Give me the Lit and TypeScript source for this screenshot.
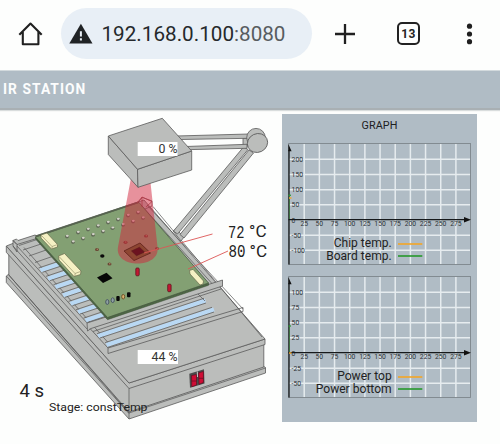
import { LitElement, html, svg, css } from "lit";
import { customElement } from "lit/decorators.js";

type Pt = [number, number];
const pts = (p: Pt[]) => p.map((q) => q.join(",")).join(" ");

@customElement("browser-bar")
class BrowserBar extends LitElement {
  static styles = css`
    :host { display: flex; align-items: center; box-sizing: border-box; height: 70px; padding: 0 17px 3px 18px; background: #fdfefd; font-family: Roboto, sans-serif; }
    svg { display: block; flex: none; }
    .pill { display: flex; align-items: center; box-sizing: border-box; width: 251px; height: 51px; margin: 0 21px 0 18px; padding-left: 8px; border-radius: 26px; background: #e8eff6; }
    .url { display: block; overflow: visible; }
    .host { font-size: 20.5px; fill: #25292c; }
    .port { fill: #575c60; }
    .tabs { display: flex; align-items: center; justify-content: center; box-sizing: border-box; width: 23px; height: 23px; margin: 0 39px 0 40px; border: 2.2px solid #222; border-radius: 5px; font-size: 12px; font-weight: 700; color: #222; letter-spacing: .3px; }
  `;
  render() {
    return html`
      <svg width="25" height="26" viewBox="18 21 25 26" fill="none" stroke="#202020" stroke-width="2.1" stroke-linejoin="round">
        <path d="M19.3 34.8 30.5 23.6 41.7 34.8M22.8 32v12.2h15.6V32"></path>
      </svg>
      <div class="pill">
        <svg width="24" height="22" viewBox="69.5 22 24 22">
          <path d="M81.4 22.8 93 42.4H69.8z" fill="#202325"></path>
          <path d="M80.4 30.2h2v5.2h-2zM80.4 37.3h2v2.2h-2z" fill="#e8eff6"></path>
        </svg>
        <svg class="url" width="190" height="26" viewBox="93 21 190 26">
          <text class="host" x="101.5" y="41" textLength="184" lengthAdjust="spacingAndGlyphs">192.168.0.100<tspan class="port">:8080</tspan></text>
        </svg>
      </div>
      <svg width="24" height="24" viewBox="0 0 24 24" stroke="#202020" stroke-width="2.3"><path d="M2 12h20M12 2v20"></path></svg>
      <div class="tabs">13</div>
      <svg width="20" height="24" viewBox="0 0 20 24" fill="#202020">
        <circle cx="10.5" cy="4.2" r="2.6"></circle><circle cx="10.5" cy="12" r="2.6"></circle><circle cx="10.5" cy="19.7" r="2.6"></circle>
      </svg>`;
  }
}

@customElement("ir-machine")
class IrMachine extends LitElement {
  static styles = css`
    :host { display: block; width: 282px; height: 334px; flex: none; }
    svg { display: block; font-family: Roboto, sans-serif; }
    .metal { fill: #bbbdbb; stroke: #5a5a5a; stroke-width: .8; stroke-linejoin: round; }
    .line { fill: none; stroke: #555; stroke-width: .7; }
    .tube { stroke: #b9d8f3; stroke-width: 4.2; }
    .cream { fill: #f5f1c4; stroke: #66694a; stroke-width: .7; }
    .box { fill: #fff; }
    .pct { font-size: 12px; fill: #333; text-anchor: end; }
    .deg { font-size: 17px; fill: #222; }
    .digits { font-family: "Liberation Mono", monospace; font-size: 18px; fill: #222; }
    .time { font-size: 18px; fill: #222; }
    .stage { font-size: 11.6px; fill: #222; }
    .pointer { stroke: #d55; stroke-width: .9; }
  `;

  base() {
    return svg`
      <polygon class="metal" points="6.3,276 9,274 129,411 263,366 265.5,367.5 265.5,373 129,419 6.3,282.5"></polygon>
      <polygon class="metal" points="8.8,252 129,386 263.8,342 263.8,367 129,412 8.8,275"></polygon>
      <path class="line" d="M8.8 275 129 413 265.5 368M129 388v31M6.3 276 129 413.6"></path>
      <polygon class="metal" points="6.3,246 129,383 265,339 265,344.5 129,388.5 6.3,252.3"></polygon>
      <polygon class="metal" points="6.3,246 14,243 144,200 265,339 129,383"></polygon>`;
  }

  rails() {
    const left = [0, 1, 2, 3, 4, 5, 6];
    return svg`
      <path class="line" d="M24 247.5l84 95M19 245.500 40 238.500M23 250l18-6M29 256l20-7M35 262.500l20-7"></path>
      ${left.map((i) => svg`
        <line class="tube" x1=${40.5 + i * 7.5} y1=${270.3 + i * 8.35} x2=${60 + i * 7.5} y2=${263.8 + i * 8.35}></line>
        <path class="line" d="M${38.5 + i * 7.5} ${268 + i * 8.35}l20-6.7M${42.5 + i * 7.5} ${272.3 + i * 8.35}l20-6.7"></path>`)}
      <line class="tube" x1="98" y1="336" x2="205.500" y2="300.500"></line>
      <line class="tube" x1="106.500" y1="345" x2="214" y2="309.500"></line>
      <path class="line" d="M93 331.500 221 289M97 333.700 204 298.300M100 338 206 303M105 342.700 212 307.300M108 347.300 214 312M196 292l9 9"></path>
      <path class="line" d="M147 205 243 309M153 206.500 262 337M141 205 216 288"></path>
      <path class="metal" d="M13 240.500 17 244.500 40 237.500 35 235 18 240.500 16.500 239zM13 240.500V246L17 252V244.500z"></path>
      <path class="line" d="M17 246 88 324M13 246 16.500 250 87 329"></path>
      <path class="metal" d="M87 323 221 280.500 222.500 280V286L91 328.500 87.500 331z"></path>
      <path class="metal" d="M90 328.500 108 348 243 307.500V311.500L108 353.500V348" fill-opacity="0"></path>
      <path class="line" d="M137 203 142.500 197.500 152 201V206L145 209"></path>`;
  }

  board() {
    const pads: Pt[] = [[67,236],[78,232],[88,229],[98,225.5],[108,222],[118,219],[128,215],[138,212],[73,241.5],[83,238],[93,234.3],[103,231],[112.5,227.7],[123,224.3],[133,221],[143,217.5]];
    const brown: Pt[] = [[97,249.5],[109.5,264],[125.5,242.3],[146,236],[157,248.5]];
    return svg`
      <polygon points="35.500,237 107.500,317 208.500,283 208.500,285.300 107.500,319.700 35.500,239" fill="#4d6744" stroke="#3c4c37" stroke-width=".5"></polygon>
      <polygon points="35.500,237 139,202.500 208.500,283 107.500,317.500" fill="#83a073" stroke="#485a41" stroke-width=".8"></polygon>
      <path d="M35.500 236.500 139 202" fill="none" stroke="#56634f" stroke-width="1.500"></path>
      ${pads.map(([x, y]) => svg`<ellipse cx=${x} cy=${y + 0.6} rx="2" ry="1.800" fill="#626a58"></ellipse><ellipse cx=${x + 0.3} cy=${y - 0.2} rx="1.500" ry="1.100" fill="#d3d3c8"></ellipse>`)}
      ${brown.map(([x, y]) => svg`<ellipse cx=${x} cy=${y} rx="2" ry="1.600" fill="#6a4634"></ellipse><circle cx=${x + 0.3} cy=${y - 0.3} r=".7" fill="#b48a68"></circle>`)}
      <ellipse cx="102.300" cy="256" rx="2.200" ry="1.700" fill="#0b0b0b"></ellipse>
      <polygon points="97,277.500 106.500,272.700 112.500,278.300 103,283" fill="#060606"></polygon>
      <polygon class="cream" points="41,235 47,233 57.500,244.500 57.500,247 51.500,249 41,238"></polygon>
      <path d="M41.500 235.500 52 246.500v2M52 246.500l5.500-2" fill="none" stroke="#98946b" stroke-width=".7"></path>
      <polygon class="cream" points="58.500,256 64.500,253.500 81,271 80.500,274.500 74,276.500 59,260"></polygon>
      <path d="M59 256.500 75 273.500v2.500M75 273.500l5.500-2" fill="none" stroke="#98946b" stroke-width=".7"></path>
      <polygon class="cream" points="189.500,270.500 193,269.300 203.500,281 203,284 200,285 190,274"></polygon>
      <g fill="#c31832" stroke="#5c1620" stroke-width=".8">
        <rect x="135.800" y="268" width="3.400" height="7.800" rx="1"></rect>
        <rect x="167.700" y="284.200" width="3.400" height="7.500" rx="1"></rect>
      </g>
      <g stroke-width=".9">
        <ellipse cx="107.300" cy="302" rx="1.600" ry="2.400" fill="#8fa1a2" stroke="#435060"></ellipse>
        <ellipse cx="112.700" cy="300.200" rx="1.600" ry="2.400" fill="#8fa1a2" stroke="#435060"></ellipse>
        <rect x="116.300" y="296" width="3.400" height="5" rx="1" fill="#080808"></rect>
        <ellipse cx="123.200" cy="296.700" rx="1.500" ry="2.300" fill="#d8b070" stroke="#6b4d22"></ellipse>
        <rect x="127" y="292.300" width="3.500" height="5" rx="1" fill="#080808"></rect>
      </g>`;
  }

  bar(p: Pt[]) {
    return svg`<polygon class="metal" points=${pts(p)}></polygon>`;
  }

  arm() {
    return svg`
      ${this.bar([[173,231],[176,229],[184,237],[181,241]])}
      ${this.bar([[243.5,147],[248,149.5],[177.5,234],[173.5,231]])}
      ${this.bar([[249,150],[253.5,153],[184,238],[180,234.5]])}
      <path class="metal" d="M243 138h6v8h-6z"></path>
      ${this.bar([[176,136],[249,134],[249,138.3],[180,139.5]])}
      ${this.bar([[186,146.5],[247,144.3],[247,148.3],[190,149.6]])}
      <ellipse class="metal" cx="256" cy="137.700" rx="9.300" ry="9.300"></ellipse>
      <ellipse class="metal" cx="257.500" cy="143" rx="10.300" ry="9.300" transform="rotate(-25 257.500 143)"></ellipse>`;
  }

  render() {
    return html`
      <svg width="282" height="334" viewBox="0 110 282 334">
        ${this.base()}${this.rails()}${this.board()}${this.arm()}
        <path d="M131 178 118 247C114 269 161 269 157.500 247L150 178z" fill="#d2233c" fill-opacity=".5"></path>
        <polygon points="124,251 140,243 150.500,253 134,260.500" fill="#8e4632" stroke="#6b2a22" stroke-width="1"></polygon>
        <polygon points="131.500,251 139.500,247.300 144.500,252 136.500,255.700" fill="#6c1220" stroke="#5a1a1c" stroke-width=".6"></polygon>
        <path d="M137 203 142 197 152 201.500 146 207M142 197v10" stroke="#b03a46" fill="none" stroke-width=".8"></path>
        <polygon class="metal" points="108.300,136 137.500,169.300 138,187.300 108.300,154.500"></polygon>
        <polygon class="metal" points="137.500,169.300 191.700,151 191.700,170 138,187.300"></polygon>
        <polygon class="metal" points="108.300,136 162.300,118.300 191.700,151 137.500,169.300"></polygon>
        <rect class="box" x="137.700" y="142" width="39.800" height="14"></rect>
        <text class="pct" x="177.500" y="153.300" textLength="19" lengthAdjust="spacingAndGlyphs">0 %</text>
        <rect class="box" x="137.700" y="350" width="40.300" height="14"></rect>
        <text class="pct" x="177.500" y="361.300" textLength="26" lengthAdjust="spacingAndGlyphs">44 %</text>
        <polygon points="189.300,373.800 204,369.200 204.500,383.500 190,387.800" fill="#4b4b4b"></polygon>
        <g fill="#d00d35" stroke="#5e1021" stroke-width=".7">
          <path d="M191.500 375.500 196.500 374.500V385L191.800 386.800zM198.600 372.800 203.400 371.500V382.500L199 384.300z"></path>
          <path d="M191.500 381h5M198.700 378.300h4.800" fill="none"></path>
        </g>
        <line x1="197.300" y1="371.500" x2="197.500" y2="377" stroke="#c8c8c8" stroke-width="1"></line>
        <line class="pointer" x1="144" y1="253" x2="212.500" y2="234"></line>
        <line class="pointer" x1="188" y1="269" x2="228" y2="251"></line>
        <text class="digits" x="228" y="238" textLength="16.500" lengthAdjust="spacingAndGlyphs">72</text>
        <text class="deg" x="249" y="237" textLength="17.500" lengthAdjust="spacingAndGlyphs">°C</text>
        <text class="digits" x="228.500" y="257" textLength="17" lengthAdjust="spacingAndGlyphs">80</text>
        <text class="deg" x="249.500" y="256.500" textLength="17.500" lengthAdjust="spacingAndGlyphs">°C</text>
        <text class="time" x="19.500" y="397.300" textLength="24.500" lengthAdjust="spacingAndGlyphs">4 s</text>
        <text class="stage" x="49" y="411" textLength="98.500" lengthAdjust="spacingAndGlyphs">Stage: constTemp</text>
      </svg>`;
  }
}

@customElement("ir-chart")
class IrChart extends LitElement {
  static properties = { ticks: { attribute: false }, series: { attribute: false }, marks: { attribute: false } };
  declare ticks: string[];
  declare series: { name: string; width: number }[];
  declare marks: number[];
  static styles = css`
    :host { display: block; }
    svg { display: block; font-family: Roboto, sans-serif; overflow: visible; }
    .grid { stroke: #e6ecef; stroke-width: 1.5; }
    .frame { fill: none; stroke: #7d868c; stroke-width: .9; }
    .axis { stroke: #16191b; stroke-width: 1.3; }
    .tick { font-size: 6.8px; fill: #2e3336; }
    .mid { text-anchor: middle; }
    .name { font-size: 12.5px; fill: #222; text-anchor: end; }
  `;
  render() {
    const cols = Array.from({ length: 11 }, (_, i) => i);
    const colors = ["#f0a72f", "#2e9a35"];
    return html`
      <svg width="195" height="122" viewBox="282 143 195 122">
        ${cols.map((i) => svg`<line class="grid" x1=${304.2 + i * 15.17} x2=${304.2 + i * 15.17} y1="143.500" y2="264.500"></line>`)}
        ${[0, 1, 2, 3, 5, 6].map((i) => svg`<line class="grid" x1="289" x2="470.500" y1=${159.3 + i * 15.17} y2=${159.3 + i * 15.17}></line>`)}
        <rect class="frame" x="288.700" y="143.500" width="181.800" height="121"></rect>
        ${this.ticks.map((t, i) => svg`<text class="tick" x="291.600" y=${161.9 + i * 15.17}>${t}</text>`)}
        ${cols.map((i) => svg`<text class="tick mid" x=${304.2 + i * 15.17} y="225.700">${25 * (i + 1)}</text>`)}
        <line class="axis" x1="288.500" x2="465" y1="219.700" y2="219.700"></line>
        <line class="axis" x1="289" x2="289" y1="150" y2="264.500"></line>
        <path d="M464 217 471 219.700 464 222.400zM288.300 144 291.600 151.300H288.300z" fill="#111"></path>
        <line x1="289.500" x2="289.500" y1=${this.marks[1]} y2="219" stroke="#3b7a3e" stroke-width=".8"></line>
        <line x1="288.500" x2="291" y1=${this.marks[1]} y2=${this.marks[1]} stroke=${colors[1]} stroke-width="1.300"></line>
        <line x1="289" x2="291.500" y1=${this.marks[0]} y2=${this.marks[0]} stroke=${colors[0]} stroke-width="1.500"></line>
        ${this.series.map((s, i) => svg`
          <text class="name" x="391.700" y=${247.3 + i * 12.2} textLength=${s.width} lengthAdjust="spacingAndGlyphs">${s.name}</text>
          <line x1="398" x2="422.300" y1=${244 + i * 12} y2=${244 + i * 12} stroke=${colors[i]} stroke-width="1.700"></line>`)}
      </svg>`;
  }
}

@customElement("app-root")
class AppRoot extends LitElement {
  static styles = css`
    :host { display: block; width: 500px; height: 444px; overflow: hidden; background: #fdfefd; font-family: Roboto, sans-serif; }
    .bar { display: flex; align-items: center; box-sizing: border-box; height: 40px; padding: 0 0 2px 3px; background: #b0bcc5; border-top: 1px solid #d3dadd; border-bottom: 2px solid #a9b0b4; box-shadow: 0 1px 1px #d9dddd; color: #fcfdfd; font-size: 13.8px; font-weight: 700; letter-spacing: 1.05px; }
    .main { display: flex; align-items: flex-start; }
    .panel { display: flex; flex-direction: column; box-sizing: border-box; width: 195px; height: 308px; margin-top: 4px; padding-top: 5px; background: #b0bcc5; }
    .title { height: 24px; line-height: 13px; text-align: center; font-size: 10.8px; color: #1d2022; letter-spacing: .1px; }
    .charts { display: flex; flex-direction: column; gap: 11px; }
  `;
  render() {
    return html`
      <browser-bar></browser-bar>
      <div class="bar">IR STATION</div>
      <div class="main">
        <ir-machine></ir-machine>
        <section class="panel">
          <div class="title">GRAPH</div>
          <div class="charts">
            <ir-chart .ticks=${["200", "150", "100", "50", "0", "-50", "-100"]} .marks=${[198, 195.3]} .series=${[{ name: "Chip temp.", width: 58 }, { name: "Board temp.", width: 65.5 }]}></ir-chart>
            <ir-chart .ticks=${["100", "75", "50", "25", "0", "-25", "-50"]} .marks=${[220, 193]} .series=${[{ name: "Power top", width: 54.5 }, { name: "Power bottom", width: 76 }]}></ir-chart>
          </div>
        </section>
      </div>`;
  }
}
